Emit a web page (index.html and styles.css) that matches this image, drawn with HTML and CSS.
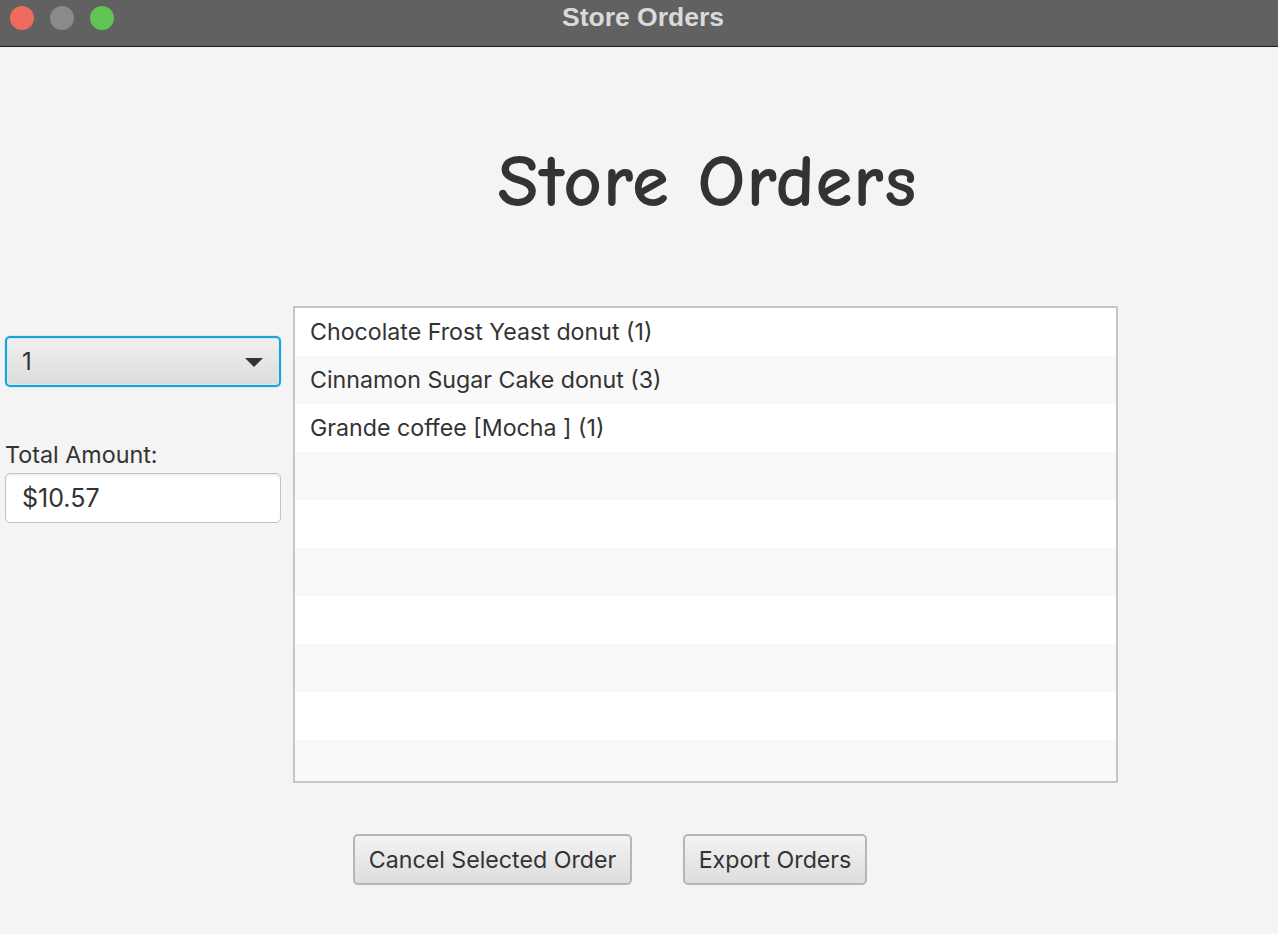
FILE: index.html
```html
<!DOCTYPE html>
<html>
<head>
<meta charset="utf-8">
<link rel="stylesheet" href="styles.css">
</head>
<body>
<div class="window">
  <div class="titlebar">
    <div class="lights">
      <span class="light red"></span>
      <span class="light gray"></span>
      <span class="light green"></span>
    </div>
    <div class="wintitle">Store Orders</div>
  </div>
  <div class="content">
    <div class="heading-row">
      <h1 class="heading">Store Orders</h1>
    </div>
    <div class="main">
      <div class="side">
        <div class="combo">
          <span class="combo-value">1</span>
          <svg class="combo-arrow" width="18" height="10" viewBox="0 0 18 10"><path d="M0 0 L18 0 L9 9 Z" fill="#333"/></svg>
        </div>
        <div class="total-label">Total Amount:</div>
        <div class="field">$10.57</div>
      </div>
      <div class="list">
        <div class="row">Chocolate Frost Yeast donut (1)</div>
        <div class="row">Cinnamon Sugar Cake donut (3)</div>
        <div class="row">Grande coffee [Mocha ] (1)</div>
        <div class="row"></div>
        <div class="row"></div>
        <div class="row"></div>
        <div class="row"></div>
        <div class="row"></div>
        <div class="row"></div>
        <div class="row"></div>
      </div>
    </div>
    <div class="buttons">
      <button class="btn btn-cancel">Cancel Selected Order</button>
      <button class="btn btn-export">Export Orders</button>
    </div>
  </div>
</div>
</body>
</html>
```

FILE: styles.css
```css
* { box-sizing: border-box; }
html, body { margin: 0; padding: 0; }
body {
  width: 1278px;
  height: 934px;
  background: #f4f4f4;
  font-family: Inter, "Noto Sans", sans-serif;
  color: #333333;
  overflow: hidden;
}
.titlebar {
  height: 47px;
  background: #616161;
  border-bottom: 1px solid #1c1c1c;
  position: relative;
  display: flex;
  align-items: center;
  justify-content: center;
}
.lights {
  position: absolute;
  left: 10px;
  top: 6px;
  display: flex;
  gap: 16px;
}
.light {
  width: 24px;
  height: 24px;
  border-radius: 50%;
  display: block;
}
.red { background: #ee6a5f; }
.gray { background: #8a8a8a; }
.green { background: #5fc453; }
.wintitle {
  font-family: "Liberation Sans", Arial, sans-serif;
  font-weight: bold;
  font-size: 26.5px;
  color: #dadada;
  margin-top: -12px;
  margin-left: 8px;
}
.content {
  padding-left: 5px;
}
.heading-row {
  height: 259px;
  padding-left: 288px;
  width: 1117px;
}
.heading {
  margin: 0;
  padding-top: 90px;
  text-align: center;
  font-family: "Comic Sans MS", "Comic Neue", Lato, sans-serif;
  font-weight: bold;
  font-size: 75px;
  line-height: 90px;
  color: #333333;
  letter-spacing: 1px;
}
.main {
  display: flex;
  align-items: flex-start;
  gap: 12px;
}
.side {
  width: 276px;
  padding-top: 30px;
}
.combo {
  height: 51px;
  border: 2px solid #1ba1dc;
  border-radius: 5px;
  background: linear-gradient(#f0f0f0, #dcdcdc);
  box-shadow: inset 0 0 0 1px #cfe9f6, 0 0 0 1px #d5ecf7;
  display: flex;
  align-items: center;
  justify-content: space-between;
  padding: 0 16px 0 15px;
}
.combo-value {
  font-size: 24px;
}
.combo-arrow {
  margin-top: 2px;
}
.total-label {
  margin-top: 53px;
  font-size: 23.3px;
  line-height: 30px;
}
.field {
  height: 50px;
  margin-top: 3px;
  background: #ffffff;
  border: 1px solid #c2c2c2;
  border-radius: 5px;
  box-shadow: inset 0 2px 2px rgba(0,0,0,0.06);
  font-size: 25px;
  line-height: 48px;
  padding-left: 16px;
}
.list {
  width: 825px;
  height: 477px;
  background: #ffffff;
  border: 2px solid #c6c6c6;
  overflow: hidden;
}
.row {
  height: 48px;
  font-size: 23.2px;
  line-height: 48px;
  padding-left: 15px;
  background: #ffffff;
}
.row:nth-child(even) { background: #f9f9f9; }
.buttons {
  display: flex;
  gap: 51px;
  padding-left: 348px;
  margin-top: 51px;
}
.btn {
  height: 51px;
  font-family: Inter, "Noto Sans", sans-serif;
  font-size: 23.2px;
  color: #333;
  background: linear-gradient(#f3f3f3, #dddddd);
  border: 2px solid #b6b6b6;
  border-radius: 5px;
  padding: 0;
}
.btn-cancel { width: 279px; }
.btn-export { width: 184px; }
```
